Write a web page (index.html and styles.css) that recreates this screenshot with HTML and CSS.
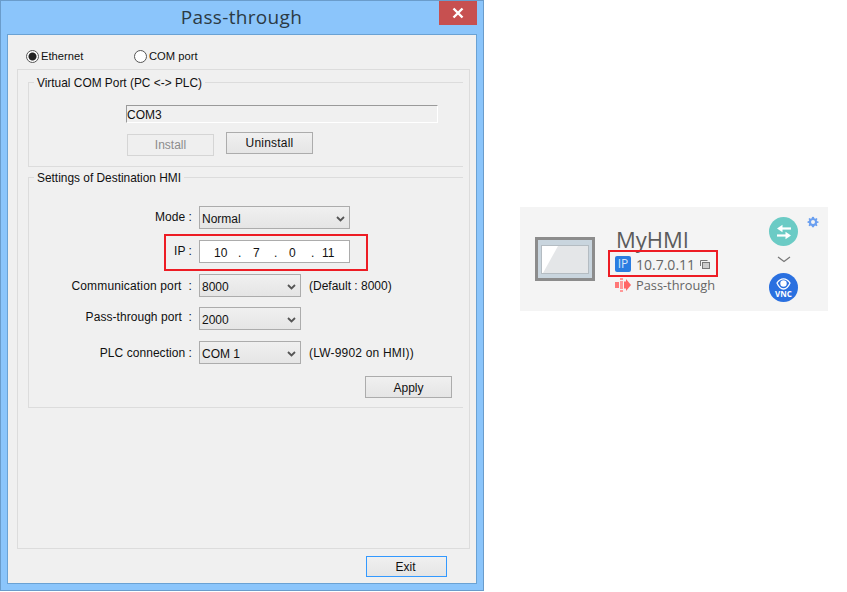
FILE: index.html
```html
<!DOCTYPE html>
<html lang="en">
<head>
<meta charset="utf-8">
<title>Pass-through</title>
<link rel="stylesheet" href="styles.css">
</head>
<body>
<section class="window">
  <header class="titlebar">
    <span class="title">Pass-through</span>
    <span class="close"><svg width="14" height="14" viewBox="0 0 14 14"><path d="M2.5 2.5l9 9M11.5 2.5l-9 9" stroke="#fff" stroke-width="2.4" fill="none"/></svg></span>
  </header>
  <div class="client">
    <div class="radios">
      <label class="radio-item radio-eth"><span class="radio radio-on"></span>Ethernet</label>
      <label class="radio-item"><span class="radio"></span>COM port</label>
    </div>
    <div class="panel">
      <div class="group group-com">
        <div class="group-title">Virtual COM Port (PC &lt;-&gt; PLC)</div>
        <div class="com-field">COM3</div>
        <div class="com-buttons">
          <span class="btn btn-disabled">Install</span>
          <span class="btn btn-raised">Uninstall</span>
        </div>
      </div>
      <div class="group group-dest">
        <div class="group-title">Settings of Destination HMI</div>
        <div class="form">
          <div class="row">
            <span class="row-label">Mode :</span>
            <span class="select select-wide"><span>Normal</span><svg class="chev" width="9" height="6" viewBox="0 0 9 6"><path d="M1 1l3.5 3.5L8 1" stroke="#555" stroke-width="1.8" fill="none"/></svg></span>
          </div>
          <div class="row">
            <span class="row-label">IP :</span>
            <span class="ip"><span>10</span><span>.</span><span>7</span><span>.</span><span>0</span><span>.</span><span>11</span></span>
          </div>
          <div class="row">
            <span class="row-label row-label-low">Communication port &nbsp;:</span>
            <span class="select"><span>8000</span><svg class="chev" width="9" height="6" viewBox="0 0 9 6"><path d="M1 1l3.5 3.5L8 1" stroke="#555" stroke-width="1.8" fill="none"/></svg></span>
            <span class="note">(Default : 8000)</span>
          </div>
          <div class="row row-tight">
            <span class="row-label row-label-high">Pass-through port &nbsp;:</span>
            <span class="select"><span>2000</span><svg class="chev" width="9" height="6" viewBox="0 0 9 6"><path d="M1 1l3.5 3.5L8 1" stroke="#555" stroke-width="1.8" fill="none"/></svg></span>
          </div>
          <div class="row">
            <span class="row-label row-label-plc">PLC connection :</span>
            <span class="select"><span>COM 1</span><svg class="chev" width="9" height="6" viewBox="0 0 9 6"><path d="M1 1l3.5 3.5L8 1" stroke="#555" stroke-width="1.8" fill="none"/></svg></span>
            <span class="note note-wide">(LW-9902 on HMI))</span>
          </div>
        </div>
        <div class="apply-row"><span class="btn btn-plain">Apply</span></div>
      </div>
    </div>
    <div class="exit-row"><span class="btn btn-focus">Exit</span></div>
  </div>
  <div class="redbox redbox-ip"></div>
</section>

<section class="card">
  <svg class="hmi" width="60" height="44" viewBox="0 0 60 44">
    <rect x="1.5" y="1.5" width="57" height="41" fill="#c9d5de" stroke="#8c8c8c" stroke-width="3"/>
    <rect x="6.5" y="8.5" width="47" height="28" fill="#e4e6e8" stroke="#b4bcc2"/>
    <path d="M7 9h16L8 36H7z" fill="#fff"/>
  </svg>
  <div class="info">
    <div class="name">MyHMI</div>
    <div class="info-line info-ip">
      <span class="badge">IP</span>
      <span>10.7.0.11</span>
      <svg class="copy" width="10" height="9" viewBox="0 0 10 9"><path d="M.5 6V.5h7" fill="none" stroke="#777"/><rect x="2.5" y="2.5" width="7" height="6" fill="#ccc" stroke="#777"/></svg>
    </div>
    <div class="info-line info-pass">
      <svg class="pass-icon" width="16" height="14" viewBox="0 0 16 14">
        <path d="M0 4h4v6H0z" fill="#f77"/>
        <path d="M5 0h3v2H5zM5 3h3v8H5zM5 12h3v2H5z" fill="#f99"/>
        <path d="M9 3.500h2V1L16 7l-5 6v-2.500H9z" fill="#f66"/>
      </svg>
      <span>Pass-through</span>
    </div>
  </div>
  <div class="actions">
    <span class="circle circle-teal"><svg width="18" height="16" viewBox="0 0 18 16"><path d="M16 4.500H6" stroke="#fff" stroke-width="2.200"/><path d="M2 4.500L7.500 .8v7.400z" fill="#fff"/><path d="M2 11.500h10" stroke="#fff" stroke-width="2.200"/><path d="M16 11.500L10.500 7.800v7.400z" fill="#fff"/></svg></span>
    <svg class="chevron" width="14" height="7" viewBox="0 0 14 7"><path d="M1 1l6 4.500L13 1" fill="none" stroke="#777" stroke-width="1.200"/></svg>
    <span class="circle circle-blue">
      <svg width="15" height="12" viewBox="0 0 15 12"><path d="M1 5C3 1.800 5 .8 7.500.8S12 1.800 14 5C12 9.500 10 11 7.500 11S3 9.500 1 5z" fill="none" stroke="#fff" stroke-width="1.300"/><circle cx="7.500" cy="5.500" r="3.200" fill="#fff"/></svg>
      <span class="vnc">VNC</span>
    </span>
  </div>
  <svg class="gear" width="12" height="12" viewBox="0 0 12 12"><path d="M6 .8l1 .2.300 1.300 1 .500L9.500 2l1 1-.8 1.200.5 1 1.300.3v1.300l-1.300.3-.5 1 .8 1.200-1 1-1.200-.8-1 .5L7 11.200H5l-.3-1.300-1-.5-1.200.8-1-1 .8-1.200-.5-1L.5 6.700V5.400l1.300-.3.500-1L1.500 3l1-1 1.200.8 1-.5L5 1z" fill="#6a9ff0"/><circle cx="6" cy="6" r="2" fill="#f4f4f4"/></svg>
  <div class="redbox redbox-card"></div>
</section>
</body>
</html>
```
FILE: styles.css
```css
* { box-sizing: border-box; }
html, body { margin: 0; padding: 0; background: #fff; }
body { width: 847px; height: 592px; position: relative; overflow: hidden; font-family: "Liberation Sans", Arial, sans-serif; font-size: 12px; color: #111; }

.window { position: absolute; left: 0; top: 0; width: 484px; height: 591px; background: #8bc5fb; border: 1px solid #6a9ccb; padding: 0 6px 6px; display: flex; flex-direction: column; }
.titlebar { height: 33px; display: flex; align-items: center; justify-content: center; flex: none; }
.title { font-family: "Open Sans", sans-serif; font-size: 19px; color: #2b3a44; letter-spacing: .33px; margin: 0 1px 2px 0; }
.close { position: absolute; left: 438px; top: 0; width: 38px; height: 24px; background: #c75050; display: flex; align-items: center; justify-content: center; }
.client { flex: 1; background: #f0f0f0; border: 1px solid #6aa2d4; display: flex; flex-direction: column; }

.radios { height: 34px; padding: 8px 0 0 18px; display: flex; align-items: center; flex: none; }
.radio-item { display: flex; align-items: center; gap: 2px; font-size: 11.200px; }
.radio-eth { width: 108px; }
.radio { width: 13px; height: 13px; border-radius: 50%; border: 1px solid #555; background: #fff; display: block; }
.radio-on { background: radial-gradient(circle, #222 0 3.500px, #fff 4.500px); }

.panel { margin-left: 9px; width: 453px; height: 480px; flex: none; border: 1px solid #dcdcdc; padding: 12px 6px 0 10px; }
.group { border: 1px solid #dcdcdc; border-right: none; }
.group-com { height: 85px; margin-bottom: 10px; }
.group-dest { height: 231px; }
.group-title { width: fit-content; margin: -7px 0 0 5px; padding: 0 3px; background: #f0f0f0; line-height: 14px; font-size: 11.900px; }

.com-field { margin: 15px 0 0 97px; width: 312px; height: 18px; line-height: 19px; border: 1px solid; border-color: #9a9a9a #fff #fff #9a9a9a; }
.com-buttons { display: flex; align-items: flex-start; margin: 9px 0 0 98px; gap: 12px; }

.btn { display: flex; align-items: center; justify-content: center; width: 87px; height: 22px; border: 1px solid #acacac; background: linear-gradient(#f0f0f0, #e5e5e5); }
.btn-disabled { margin-top: 2px; background: #efefef; border-color: #d5d5d5; color: #8c8c8c; }
.btn-raised { letter-spacing: .2px; }
.btn-plain { padding-top: 2px; }
.btn-focus { width: 81px; height: 21px; border-color: #3399ff; padding-right: 2px; }

.form { margin-top: 21px; display: flex; flex-direction: column; gap: 11px; }
.row { display: flex; align-items: center; height: 23px; }
.row-tight { margin-top: -1px; }
.row-label { width: 163px; margin-right: 7px; text-align: right; white-space: nowrap; padding-bottom: 2px; letter-spacing: .05px; }
.row-label-low { padding-bottom: 0; letter-spacing: .15px; }
.row-label-plc { padding-bottom: 0; }
.row-label-high { padding-bottom: 4px; }
.select { width: 102px; height: 23px; display: flex; align-items: center; justify-content: space-between; padding: 2px 4px 0 2px; border: 1px solid #acacac; background: linear-gradient(#f0f0f0, #e5e5e5); }
.select-wide { width: 151px; }
.note { margin-left: 8px; }
.note-wide { letter-spacing: .2px; }
.ip { width: 151px; height: 23px; background: #fff; border: 1px solid #acacac; display: grid; grid-template-columns: 24px 15px 21px 15px 22px 11px auto; align-items: center; padding: 2px 0 0 14px; }

.apply-row { display: flex; justify-content: flex-end; padding-right: 11px; margin-top: 12px; }
.exit-row { display: flex; justify-content: flex-end; padding: 7px 29px 0 0; }

.redbox { position: absolute; border: 2px solid #ed1c24; }
.redbox-ip { left: 163px; top: 233px; width: 204px; height: 37px; }

.card { position: absolute; left: 520px; top: 207px; width: 308px; height: 104px; background: #f4f4f4; display: flex; align-items: flex-start; padding: 30px 0 0 15px; color: #666; font-family: "Open Sans", sans-serif; }
.info { width: 153px; margin: -11px 0 0 21px; flex: none; }
.name { font-size: 22px; line-height: 26px; height: 28px; color: #5b5b5b; }
.info-line { display: flex; align-items: center; font-size: 14px; height: 20px; margin-left: -1px; white-space: nowrap; }
.info-pass { font-size: 12.800px; margin-top: 1px; }
.badge { width: 16px; height: 16px; background: #2a7de1; border-radius: 2px; color: #d7e6fa; font-size: 12px; line-height: 16px; text-align: center; margin-right: 5px; }
.copy { margin-left: 5px; }
.pass-icon { margin-right: 5px; }
.actions { margin: -20px 0 0 0; display: flex; flex-direction: column; align-items: center; width: 29px; flex: none; }
.circle { width: 29px; height: 29px; border-radius: 50%; display: flex; flex-direction: column; align-items: center; justify-content: center; }
.circle-teal { background: #6bcbc5; }
.circle-blue { background: #2a70e0; }
.chevron { margin: 10px 0 10px; display: block; }
.vnc { font-size: 8px; line-height: 8px; font-weight: 700; color: #fff; }
.gear { position: absolute; left: 287px; top: 9px; }
.redbox-card { left: 88px; top: 43px; width: 110px; height: 27px; }
```
